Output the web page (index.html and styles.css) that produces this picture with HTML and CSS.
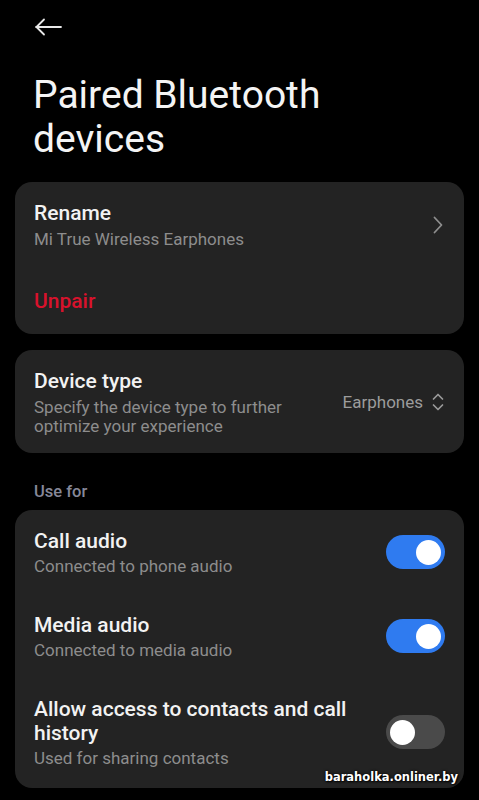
FILE: index.html
```html
<!DOCTYPE html>
<html lang="en">
<head>
    <meta charset="UTF-8">
    <meta name="viewport" content="width=device-width, initial-scale=1.0">
    <title>Paired Bluetooth devices</title>
    <link rel="stylesheet" href="styles.css">
</head>
<body>
    <div class="page">
        <div class="topbar">
            <svg class="back" width="28" height="18" viewBox="0 0 28 18">
                <path d="M2 9 H27 M10 1.5 L2.5 9 L10 16.5" fill="none" stroke="#e8e8e8" stroke-width="1.8" stroke-linecap="round" stroke-linejoin="round"/>
            </svg>
        </div>

        <h1 class="title">Paired Bluetooth devices</h1>

        <div class="card card-device">
            <div class="row">
                <div class="text">
                    <div class="label">Rename</div>
                    <div class="sub">Mi True Wireless Earphones</div>
                </div>
                <svg class="chevron" width="10" height="18" viewBox="0 0 10 18">
                    <path d="M1.5 1.5 L8.5 9 L1.5 16.5" fill="none" stroke="#8e8e8e" stroke-width="1.8" stroke-linecap="round" stroke-linejoin="round"/>
                </svg>
            </div>
            <div class="label danger">Unpair</div>
        </div>

        <div class="card card-type">
            <div class="row">
                <div class="text">
                    <div class="label">Device type</div>
                    <div class="sub multi">Specify the device type to further optimize your experience</div>
                </div>
                <div class="value">
                    <span>Earphones</span>
                    <svg width="12" height="20" viewBox="0 0 12 20">
                        <path d="M1.5 7 L6 2.5 L10.5 7 M1.5 13 L6 17.5 L10.5 13" fill="none" stroke="#9a9a9a" stroke-width="1.7" stroke-linecap="round" stroke-linejoin="round"/>
                    </svg>
                </div>
            </div>
        </div>

        <div class="section">Use for</div>

        <div class="card card-list">
            <div class="item">
                <div class="text">
                    <div class="label">Call audio</div>
                    <div class="sub">Connected to phone audio</div>
                </div>
                <div class="toggle on"><span class="knob"></span></div>
            </div>
            <div class="item">
                <div class="text">
                    <div class="label">Media audio</div>
                    <div class="sub">Connected to media audio</div>
                </div>
                <div class="toggle on"><span class="knob"></span></div>
            </div>
            <div class="item">
                <div class="text">
                    <div class="label">Allow access to contacts and call history</div>
                    <div class="sub">Used for sharing contacts</div>
                </div>
                <div class="toggle"><span class="knob"></span></div>
            </div>
        </div>

        <div class="watermark">baraholka.onliner.by</div>
    </div>
</body>
</html>
```

FILE: styles.css
```css
body { margin: 0; background-color: #000; color: #f2f2f2; font-family: Roboto, "Noto Sans", sans-serif; }
.page { position: relative; padding: 0 15px; height: 800px; overflow: hidden; }
.topbar { height: 54px; display: flex; align-items: center; padding-left: 19px; }
.title { margin: 19px 0 21px 18px; max-width: 360px; font-size: 39px; line-height: 44px; font-weight: 400; color: #f4f4f4; }

.card { background-color: #232323; border-radius: 17px; }
.card-device { padding: 19px 19px 21px; }
.card-type { margin-top: 16px; padding: 19px 19px 17px; }
.card-list { padding: 1px 0; }

.row { display: flex; align-items: center; }
.text { flex: 1; min-width: 0; }
.label { font-size: 21px; line-height: 24px; font-weight: 500; color: #f2f2f2; }
.sub { margin-top: 3.5px; font-size: 17px; line-height: 20px; color: #8d8d8d; }
.sub.multi { margin-top: 5px; line-height: 19px; padding-right: 30px; }
.danger { margin-top: 40px; color: #d8122c; }
.chevron { margin-right: 2px; }

.value { display: flex; align-items: center; gap: 9px; font-size: 17px; color: #9c9c9c; margin-right: 1px; }

.section { margin: 29px 0 8px 19px; font-size: 16.5px; line-height: 20px; font-weight: 500; color: #868899; }

.item { display: flex; align-items: center; padding: 18px 19px 18.5px; gap: 16px; }
.toggle { width: 59px; height: 34px; border-radius: 17px; background-color: #4a4a4a; flex: none; position: relative; }
.toggle.on { background-color: #2f7bf0; }
.knob { position: absolute; top: 4.5px; left: 4px; width: 25px; height: 25px; border-radius: 50%; background-color: #fff; }
.toggle.on .knob { left: 30px; }

.watermark { position: absolute; right: 21px; top: 770px; font-family: "DejaVu Sans", sans-serif; font-weight: bold; font-size: 11.5px; color: #fff; text-shadow: 1px 1px 2px #000, 0 0 3px #000; }
```
